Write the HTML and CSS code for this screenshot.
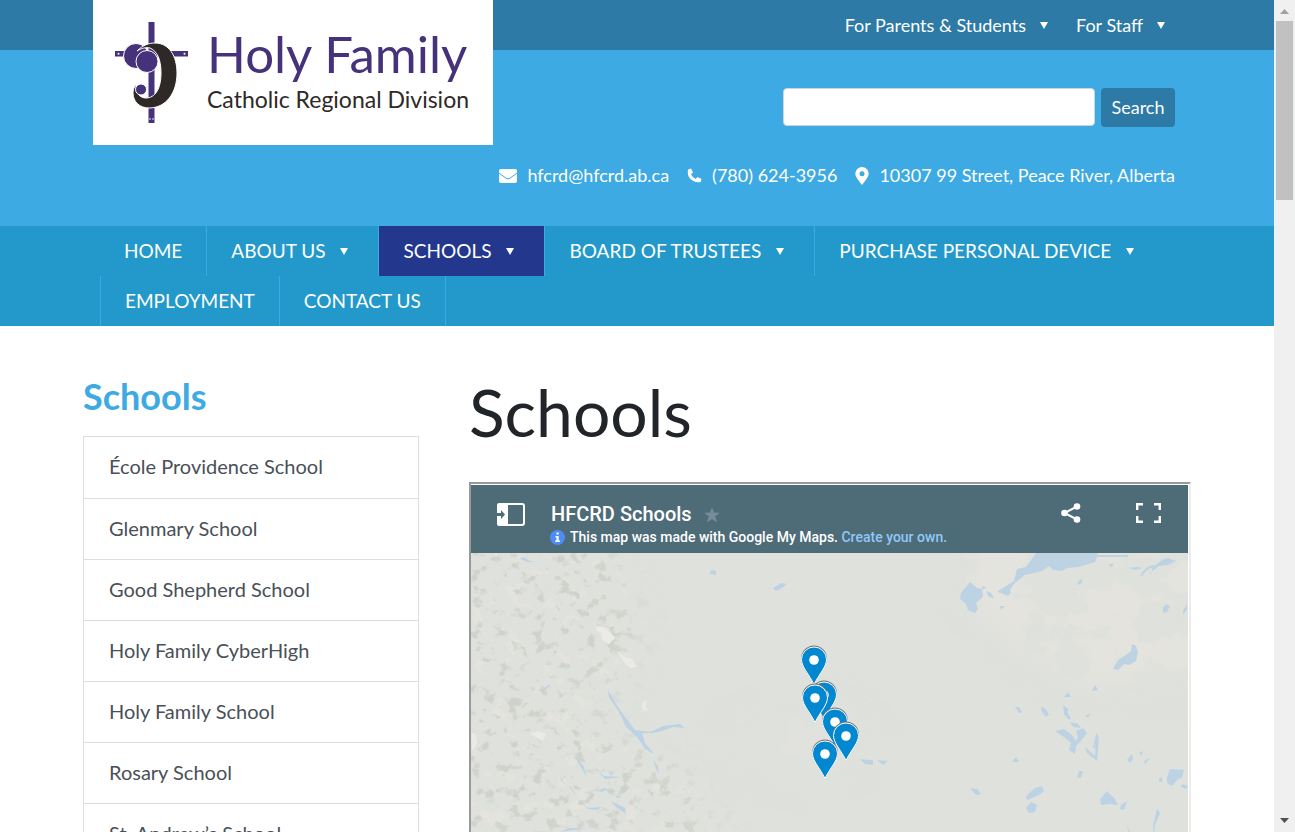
FILE: index.html
```html
<!DOCTYPE html>
<html lang="en">
<head>
<meta charset="utf-8">
<meta name="viewport" content="width=device-width, initial-scale=1">
<title>Schools - Holy Family Catholic Regional Division</title>
<link rel="stylesheet" href="styles.css">
</head>
<body>
<div class="page">
  <header class="header">
    <div class="topbar"></div>
    <div class="container header-inner">
      <a class="logo" href="#">
        <svg class="logo-mark" viewBox="0 0 74 102" width="74" height="102" aria-hidden="true">
          <g fill="#46327a">
            <path d="M33.500 0h6v101h-6zM0 29h73v5.500H0z"/>
            <circle cx="21" cy="34" r="12.500" stroke="#fff"/>
          </g>
          <path d="M22 29C28 23 34 21 40 21c14 0 22 13 22 30 0 20-11 35-28 35-9 0-16-6-16-15 0-3 1-6 3-9-1 9 4 14 10 14 9 0 15-9 15-25 0-14-4-22-11-25-4-1-8 0-13 3z" fill="#2e2926" stroke="#fff"/>
          <circle cx="32" cy="39.500" r="11" fill="#46327a" stroke="#fff"/>
          <circle cx="26" cy="67.500" r="5.500" fill="#46327a" stroke="#fff"/>
          <g fill="#fff"><circle cx="3.500" cy="31.700" r="1"/><circle cx="69.500" cy="31.700" r="1"/><circle cx="35" cy="97" r=".8"/><circle cx="38" cy="97" r=".8"/></g>
        </svg>
        <span class="logo-text"><span class="logo-name">Holy Family</span><span class="logo-sub">Catholic Regional Division</span></span>
      </a>
      <div class="header-side">
        <nav class="top-links" aria-label="Audience">
          <a href="#">For Parents &amp; Students<i class="caret"></i></a>
          <a href="#">For Staff<i class="caret"></i></a>
        </nav>
        <form class="search">
          <input type="search" aria-label="Search this site">
          <button type="button">Search</button>
        </form>
        <address class="contact">
          <a href="#"><svg width="18" height="14" viewBox="0 0 18 14" aria-hidden="true"><rect width="18" height="14" rx="2" fill="#fff"/><path d="M0 4l7 5.200q2 1.400 4 0L18 4" fill="none" stroke="#3daae3"/></svg>hfcrd@hfcrd.ab.ca</a>
          <a href="#"><svg width="15" height="15" viewBox="0 0 15 15" aria-hidden="true"><path d="M1 1.500 4 .5l2 4-2 1.800q1.300 3 4.700 4.700l1.800-2 4 2-.8 3Q7 15 3 10.500 0 7 1 1.500z" fill="#fff"/></svg>(780) 624-3956</a>
          <span><svg width="14" height="18" viewBox="0 0 14 18" aria-hidden="true"><path fill-rule="evenodd" d="M7 0a6.700 6.700 0 0 1 6.700 6.700C13.700 10 9.500 14.500 7 18 4.500 14.500.3 10 .3 6.700A6.700 6.700 0 0 1 7 0zm0 4.200a2.500 2.500 0 1 0 0 5 2.500 2.500 0 0 0 0-5z" fill="#fff"/></svg>10307 99 Street, Peace River, Alberta</span>
        </address>
      </div>
    </div>
  </header>
  <nav class="mainnav" aria-label="Main">
    <ul class="container">
      <li><a href="#">HOME</a></li>
      <li><a href="#">ABOUT US<i class="caret"></i></a></li>
      <li class="current"><a href="#" aria-current="page">SCHOOLS<i class="caret"></i></a></li>
      <li><a href="#">BOARD OF TRUSTEES<i class="caret"></i></a></li>
      <li><a href="#">PURCHASE PERSONAL DEVICE<i class="caret"></i></a></li>
      <li><a href="#">EMPLOYMENT</a></li>
      <li><a href="#">CONTACT US</a></li>
    </ul>
  </nav>
  <div class="container content">
    <aside class="sidebar">
      <h2>Schools</h2>
      <ul>
        <li><a href="#">École Providence School</a></li>
        <li><a href="#">Glenmary School</a></li>
        <li><a href="#">Good Shepherd School</a></li>
        <li><a href="#">Holy Family CyberHigh</a></li>
        <li><a href="#">Holy Family School</a></li>
        <li><a href="#">Rosary School</a></li>
        <li><a href="#">St. Andrew’s School</a></li>
      </ul>
    </aside>
    <main>
      <h1>Schools</h1>
      <section class="map" aria-label="HFCRD Schools map">
        <div class="map-bar">
          <button class="map-btn" type="button" aria-label="Show legend">
            <svg width="28" height="23" viewBox="0 0 28 23"><path d="M2 0h7v23H2q-2 0-2-2V2Q0 0 2 0z" fill="#fff"/><path d="M10 1h15q2 0 2 2v17q0 2-2 2H10z" fill="none" stroke="#fff" stroke-width="2"/><path d="M0 10h4V7l4 4.500L4 16v-3H0z" fill="#4e6b78"/></svg>
          </button>
          <div class="map-title">
            <div class="map-name">HFCRD Schools
              <svg width="16" height="16" viewBox="0 0 16 16" aria-hidden="true"><path d="M8 0l2 5.500 6 .2-4.700 3.600L13 15.500 8 12l-5 3.500 1.700-6.200L0 5.700l6-.2z" fill="#768c97"/></svg>
            </div>
            <div class="map-note"><svg width="15" height="15" viewBox="0 0 15 15" aria-hidden="true"><circle cx="7.500" cy="7.500" r="7.500" fill="#4d8df6"/><path d="M6.500 2.500h2.200v2H6.500zM5.500 6h3.200v4.500H10V12H5.200v-1.500h1.300v-3h-1z" fill="#fff"/></svg><span>This map was made with Google My Maps. <a href="#">Create your own.</a></span></div>
          </div>
          <button class="map-btn" type="button" aria-label="Share">
            <svg width="20" height="20" viewBox="0 0 20 20"><path d="M16 3.500 3.500 10 16 16.500" fill="none" stroke="#fff" stroke-width="2"/><g fill="#fff"><circle cx="3.500" cy="10" r="3.300"/><circle cx="16" cy="3.500" r="3.300"/><circle cx="16" cy="16.500" r="3.300"/></g></svg>
          </button>
          <button class="map-btn" type="button" aria-label="Full screen">
            <svg width="25" height="20" viewBox="0 0 25 20"><path d="M1.200 7V1.200H7M18 1.200h5.800V7M23.800 13v5.800H18M7 18.800H1.200V13" fill="none" stroke="#fff" stroke-width="2.400"/></svg>
          </button>
        </div>
        <svg class="terrain" viewBox="0 0 717 412" role="img" aria-label="Map of northern Alberta with school locations">
          <defs>
            <filter id="soft" x="-50%" y="-50%" width="200%" height="200%"><feGaussianBlur stdDeviation="16"/></filter>
            <filter id="dark" x="0" y="0" width="100%" height="100%" color-interpolation-filters="sRGB"><feTurbulence type="fractalNoise" baseFrequency=".08 .09" numOctaves="4" seed="7"/><feColorMatrix values="0 0 0 0 .79  0 0 0 0 .8  0 0 0 0 .77  7 0 0 0 -4"/></filter>
            <filter id="pale" x="0" y="0" width="100%" height="100%" color-interpolation-filters="sRGB"><feTurbulence type="fractalNoise" baseFrequency=".06 .07" numOctaves="4" seed="21"/><feColorMatrix values="0 0 0 0 .905  0 0 0 0 .895  0 0 0 0 .875  8 0 0 0 -4.600"/></filter>
            <filter id="land" x="0" y="0" width="100%" height="100%" color-interpolation-filters="sRGB"><feTurbulence type="fractalNoise" baseFrequency=".018 .024" numOctaves="5" seed="4"/><feColorMatrix values="0 0 0 0 .9  0 0 0 0 .893  0 0 0 0 .875  8 0 0 0 -3.500"/></filter>
            <mask id="hills"><path d="M-30-30H130L175 80 150 130 120 165 210 215 260 290H-30z" fill="#fff" opacity=".7" filter="url(#soft)"/></mask>
            <mask id="plains"><path d="M480-20H740V140L600 130 500 60z" fill="#fff" opacity=".8" filter="url(#soft)"/><ellipse cx="330" cy="190" rx="80" ry="42" fill="#fff" opacity=".4" filter="url(#soft)"/></mask>
            <g id="pin"><path d="M0-14.500a13 13 0 0 1 13 13C13 7 5 14 0 24.500-5 14-13 7-13-1.500a13 13 0 0 1 13-13z" fill="#777"/><path d="M0-13A12.500 12.500 0 0 1 12.500-.5C12.500 7 5 14 0 24.500-5 14-12.500 7-12.500-.5A12.500 12.500 0 0 1 0-13z" fill="#0288d1" stroke="#fff"/><circle r="4.800" fill="#fff"/></g>
          </defs>
          <rect width="717" height="412" fill="#dee1dc"/>
          <rect width="717" height="412" filter="url(#land)" mask="url(#plains)"/>
          <g mask="url(#hills)"><rect width="320" height="412" filter="url(#pale)"/><rect width="320" height="412" filter="url(#dark)"/></g>
          <g fill="#ebeae7"><path d="M126 73l8 2 6 6 4 4-6 6-7-4-1-7-5-3zM146 98l8 6 7 2 5 8-7 1-6-6zM0 178l5 4 1 9-5 7zM59 181l8-3 8 3-3 7-7-4zM171 150l5-3-2 6 3 5-5-1z"/></g>
          <g fill="#bdd3e4">
            <path d="M527 38l16-10 3-12 9-2 10-14h62l-3 9-16 5-12 1-5 3-9-1-4-4-7 5-17 4-11 9-4 6 1 3-3 3-10-4z"/>
            <path d="M490 40l9-11 7 6 5 1 1 8-7 6 2 6-3 4-7-3-3-7-5-4z"/><path d="M511 33l4 1-3 3zM515 38l5 2 3 5-5-1zM529 53l5 0-4 4zM607 29l4-4 0 5-5 2zM637 12l6-2-2 4zM657 15l10-1 4 1-6 2zM679 24l3-10 9-7 6-2 8 3-8 4-9 1-8 6z"/>
            <path d="M692 55l3-4 4 2-3 6-4 1zM712 58l4-7v5l-4 6zM642 116l5-9 8-5 5-4 1-7 4 2 2 6-2 9-7 4-5-1-6 6z"/>
            <path d="M544 154l4 0 3 5-3 1zM570 154l5 2 3 6-3 2-4-5zM593 144l4-5 3 5zM592 152l5 4 0 5 3 4-2 2-5-6zM599 169l8 2 3 4-8-1zM584 178l9-2 8 6 4 6 2-4-2-6 7-3 4 5-7 9-4 4-1 8-6-4 2-7-7-6z"/>
            <path d="M621 138l3-6 3 5zM614 163l6-3-3 5zM625 184l3-1-1 14-1 11-10-8-2-6 10 9zM541 209l4-5 3 5zM555 243l9-8 7-2 2 5-5 4-12 5zM555 255l5-6 6 3-2 7-6 1zM608 218l4 0-2 7-4-1zM629 246l7-8 8 8 3 6-8-1-9 1zM650 252l6-4-3 9-4-1zM656 207l5-6 1 5-3 4zM673 208l7-4-6 7z"/>
            <path d="M696 224l3-8 14 1-2 8-4 1-6 7-5-3zM711 231l6 2-2 3-5-2zM688 226l3-2v5h-3zM682 273l4-17 3 4-5 12-1 10zM655 270l3 10 4 3-4-6zM499 235l7 1 4 5-5 1zM668 200l4-2-1 5z"/>
            <path d="M302 35l8-5 6 1-5 4-6 3zM240 17l5 1v4l-6-1zM49 6l8 3 7 0-5-1-7-4zM389 206l8 1h5v5l-8-1zM406 207l11 1-5 4z"/>
            <path d="M137 137l8 14 9 13 10 13 15 2 13-6 17-2 5 4-12-1-11 4-9 2-11 0 3 10 9 11-9-5-8-12-11-10-7-15-10-15zM101 198l12 16 2 9-4-7zM89 221l3 9 8 4 5 9 12 12 14-1-5 3-9-1-13-14-6-9-8-5zM128 220l6 3 17 1-17 2zM126 238l8-3 3 1-6 3zM140 248l14 7 1 6-10-7zM182 206l5 8 1 8-4-9zM84 49l5 9-2-1zM71 137l8-6v2l-7 5zM89 279l10-4 18 1-15 1zM135 274l10-1-5 2zM144 242l7 2-5 1zM180 239h2v4h-2z"/>
          </g>
          <path d="M623 3h34M670 23q5-9 13-10M623 195l3-14" fill="none" stroke="#bdd3e4" stroke-width="2"/>
          <use href="#pin" x="343" y="107"/><use href="#pin" x="353" y="142"/><use href="#pin" x="344" y="145"/><use href="#pin" x="364" y="169"/><use href="#pin" x="375" y="183"/><use href="#pin" x="354" y="201"/>
        </svg>
      </section>
    </main>
  </div>
</div>
<div class="scrollbar" aria-hidden="true">
  <svg width="9" height="5" viewBox="0 0 9 5"><path d="M0 5l4.500-5L9 5z" fill="#a0a0a0"/></svg>
  <div class="thumb"></div>
  <svg width="9" height="5" viewBox="0 0 9 5"><path d="M0 0l4.500 5L9 0z" fill="#505050"/></svg>
</div>
</body>
</html>
```
FILE: styles.css
```css
*, *::before, *::after { box-sizing: border-box; }
body {
  margin: 0;
  height: 100vh;
  display: flex;
  overflow: hidden;
  background: #fff;
  color: #212529;
  font-family: Lato, "Open Sans", sans-serif;
  font-size: 18px;
}
a { color: inherit; text-decoration: none; }
ul { list-style: none; margin: 0; padding: 0; }
svg { display: block; flex: none; }
h1, h2 { margin: 0; }
.page { flex: 1; min-width: 0; overflow: hidden; }
.container { width: 100%; max-width: 1108px; margin: 0 auto; }

.header { display: grid; background: #3daae3; color: #fff; }
.topbar { grid-area: 1 / 1; align-self: start; height: 50px; background: #2c7aa5; }
.header-inner {
  grid-area: 1 / 1;
  display: flex;
  justify-content: space-between;
  align-items: flex-start;
  padding: 0 16px 0 10px;
}
.logo {
  display: flex;
  align-items: flex-start;
  gap: 18px;
  width: 400px;
  height: 145px;
  padding: 22px 16px 22px 22px;
  background: #fff;
}
.logo-text { display: flex; flex-direction: column; padding-top: 2px; white-space: nowrap; }
.logo-name { font-size: 51px; line-height: 60px; color: #46327a; }
.logo-sub { font-size: 23px; line-height: 30px; color: #2e2926; }
.header-side { display: flex; flex-direction: column; align-items: flex-end; margin-left: -20px; }
.top-links { display: flex; gap: 28px; height: 50px; align-items: center; padding-right: 10px; }
.top-links a { display: flex; align-items: center; gap: 14px; }
.caret { border: 4px solid transparent; border-top: 7px solid #fff; border-bottom: 0; }
.search { display: flex; gap: 6px; margin-top: 38px; }
.search input {
  width: 312px;
  height: 38px;
  padding: 6px 12px;
  border: 1px solid #ced4da;
  border-radius: 4px;
  background: #fff;
  font: inherit;
}
.search button {
  width: 74px;
  height: 39px;
  padding: 0 0 2px;
  border: 0;
  border-radius: 4px;
  background: #2c7aa5;
  color: #fff;
  font: inherit;
}
.contact { display: flex; gap: 18px; margin: 34px 0 36px; line-height: 29px; font-style: normal; white-space: nowrap; }
.contact > * { display: flex; align-items: center; gap: 10px; }

.mainnav { background: #2299ca; color: #fff; font-size: 19px; line-height: 50px; }
.mainnav ul { display: flex; flex-wrap: wrap; padding: 0 17px; }
.mainnav li { border-left: 1px solid #3daae3; }
.mainnav li:first-child { border-left: 0; }
.mainnav li:last-child { border-right: 1px solid #3daae3; }
.mainnav a { display: flex; align-items: center; gap: 15px; padding: 0 24px; }
.mainnav a:has(.caret) { padding-right: 30px; }
.mainnav .current { background: #23378d; }

.content { display: flex; gap: 50px; padding-top: 46px; }
.sidebar { flex: 0 0 336px; }
.sidebar h2 { font-size: 36px; line-height: 48px; color: #3daae3; font-weight: 700; }
.sidebar ul { margin-top: 16px; border: 1px solid #dedede; }
.sidebar li { padding: 0 25px 2px; border-bottom: 1px solid #dedede; font-size: 20px; line-height: 58px; color: #495057; }
.sidebar li:first-child { padding-bottom: 3px; }
main { flex: 1; min-width: 0; }
h1 { font-size: 66px; line-height: 80px; font-weight: 400; }
.map { margin-top: 30px; border: 2px solid; border-color: #999 #ededed #ededed #999; padding: 1px 1px 0 0; }
.map-bar {
  display: flex;
  height: 68px;
  padding: 18px 27px 0 26px;
  background: #4e6b78;
  color: #fff;
  font-family: Roboto, sans-serif;
}
.map-btn { align-self: flex-start; padding: 0; border: 0; background: none; }
.map-btn + .map-btn { margin-left: 55px; }
.map-title { flex: 1; padding-left: 25px; }
.map-name { display: flex; gap: 12px; align-items: center; padding-left: 1px; font-size: 20px; line-height: 23px; font-weight: 500; }
.map-note { display: flex; gap: 5px; align-items: center; font-size: 14px; line-height: 22px; font-weight: 500; }
.map-note a { color: #8ec9f9; }
.terrain { width: 100%; height: auto; }

.scrollbar {
  flex: 0 0 21px;
  display: flex;
  flex-direction: column;
  align-items: center;
  justify-content: space-between;
  padding: 9px 2px;
  background: #f0f0f0;
}
.thumb { width: 17px; height: 179px; margin: 7px 0 auto; background: #c1c1c1; }
```
